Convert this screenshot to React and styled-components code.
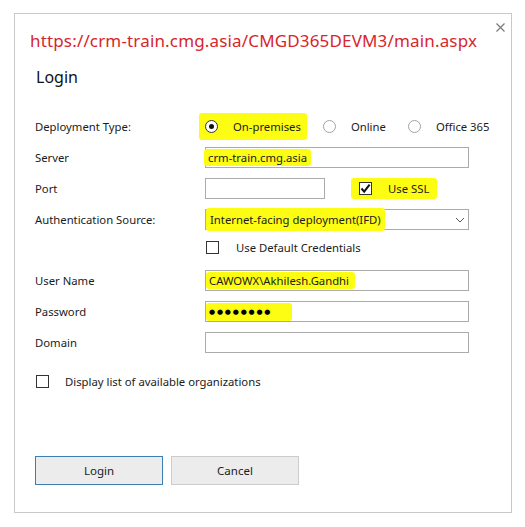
import React from 'react';
import styled, { createGlobalStyle } from 'styled-components';

const GlobalStyle = createGlobalStyle`
  html, body {
    margin: 0;
    padding: 0;
    background: #ffffff;
  }
  body {
    font-family: "Noto Sans", "Open Sans", Arial, sans-serif;
    color: #1b1b1b;
  }
`;

const Styled = {
  Dialog: styled.div`
    position: relative;
    box-sizing: border-box;
    width: 498px;
    height: 500px;
    margin: 13px 0 0 14px;
    border: 1px solid #c9c9c9;
    background: #ffffff;
    padding: 16px 20px 0 20px;
  `,
  Close: styled.button`
    position: absolute;
    top: 6px;
    right: 4px;
    width: 14px;
    height: 14px;
    padding: 0;
    border: 0;
    background: transparent;
    display: flex;
    align-items: center;
    justify-content: center;
  `,
  Url: styled.div`
    margin-left: -5px;
    font-family: "Noto Sans", Arial, sans-serif;
    font-size: 17px;
    line-height: 22px;
    color: #d7262b;
    letter-spacing: 0.16px;
  `,
  Title: styled.h1`
    margin: 14px 0 0 1px;
    font-size: 16px;
    font-weight: 400;
    line-height: 22px;
    color: #111111;
  `,
  Form: styled.div`
    margin-top: 23px;
    display: flex;
    flex-direction: column;
    font-size: 11.3px;
  `,
  Row: styled.div`
    display: grid;
    grid-template-columns: 170px 264px;
    align-items: center;
    height: ${props => props.h || 31}px;
    margin-top: ${props => props.gap || 0}px;
  `,
  Label: styled.div`
    color: #1b1b1b;
    white-space: nowrap;
  `,
  Controls: styled.div`
    display: flex;
    align-items: center;
  `,
  Option: styled.div`
    display: flex;
    align-items: center;
    gap: 15px;
    margin-right: 22px;
    white-space: nowrap;
  `,
  Highlight: styled.span`
    display: inline-flex;
    align-items: center;
    gap: ${props => props.gap || 0}px;
    background: #fdfd14;
    border-radius: 3px;
    padding: ${props => props.pad || '3px 6px'};
    margin: ${props => props.m || '-3px -6px'};
    white-space: nowrap;
  `,
  Radio: styled.span`
    box-sizing: border-box;
    width: 13px;
    height: 13px;
    border-radius: 50%;
    border: 1px solid ${props => (props.checked ? '#333333' : '#a3a3a3')};
    background: #ffffff;
    display: flex;
    align-items: center;
    justify-content: center;
    &::after {
      content: '';
      display: ${props => (props.checked ? 'block' : 'none')};
      width: 5px;
      height: 5px;
      border-radius: 50%;
      background: #111111;
    }
  `,
  Check: styled.span`
    box-sizing: border-box;
    width: 13px;
    height: 13px;
    border: 1px solid #333333;
    background: #ffffff;
    display: flex;
    align-items: center;
    justify-content: center;
    flex-shrink: 0;
  `,
  CheckRow: styled.label`
    display: flex;
    align-items: center;
    gap: ${props => props.gap || 17}px;
    white-space: nowrap;
  `,
  Field: styled.div`
    box-sizing: border-box;
    width: ${props => props.w || 264}px;
    height: 21px;
    border: 1px solid #ababab;
    background: #ffffff;
    display: flex;
    align-items: center;
    justify-content: space-between;
    padding: 0 3px;
    white-space: nowrap;
  `,
  Dots: styled.span`
    font-family: "DejaVu Sans", sans-serif;
    font-size: 7px;
    line-height: 14px;
    letter-spacing: 1.8px;
    color: #000000;
  `,
  Buttons: styled.div`
    display: flex;
    gap: 8px;
    margin-top: 59px;
  `,
  Button: styled.button`
    box-sizing: border-box;
    width: 128px;
    height: 29px;
    border: 1px solid ${props => (props.primary ? '#3d7fb4' : '#cccccc')};
    background: #ececec;
    font-family: "Noto Sans", Arial, sans-serif;
    font-size: 11.5px;
    color: #1b1b1b;
    padding: 0;
  `,
};

const Tick = () => (
  <svg width="11" height="11" viewBox="0 0 11 11">
    <path d="M1.5 5.5 L4.2 8.6 L9.6 1.6" fill="none" stroke="#111" strokeWidth="2" />
  </svg>
);

const Chevron = () => (
  <svg width="10" height="6" viewBox="0 0 10 6">
    <path d="M1 1 L5 5 L9 1" fill="none" stroke="#555" strokeWidth="1" />
  </svg>
);

function App() {
  return (
    <>
      <GlobalStyle />
      <Styled.Dialog>
        <Styled.Close aria-label="close">
          <svg width="9" height="9" viewBox="0 0 9 9">
            <path d="M0.5 0.5 L8.5 8.5 M8.5 0.5 L0.5 8.5" stroke="#7a7a7a" strokeWidth="1.2" />
          </svg>
        </Styled.Close>
        <Styled.Url>https://crm-train.cmg.asia/CMGD365DEVM3/main.aspx</Styled.Url>
        <Styled.Title>Login</Styled.Title>

        <Styled.Form>
          <Styled.Row>
            <Styled.Label>Deployment Type:</Styled.Label>
            <Styled.Controls>
              <Styled.Option>
                <Styled.Highlight gap={15} pad="6px 6px" m="-6px -6px">
                  <Styled.Radio checked />
                  On-premises
                </Styled.Highlight>
              </Styled.Option>
              <Styled.Option>
                <Styled.Radio />
                Online
              </Styled.Option>
              <Styled.Option>
                <Styled.Radio />
                Office 365
              </Styled.Option>
            </Styled.Controls>
          </Styled.Row>

          <Styled.Row>
            <Styled.Label>Server</Styled.Label>
            <Styled.Field>
              <Styled.Highlight pad="1px 4px" m="0 0 0 -5px">crm-train.cmg.asia</Styled.Highlight>
            </Styled.Field>
          </Styled.Row>

          <Styled.Row>
            <Styled.Label>Port</Styled.Label>
            <Styled.Controls>
              <Styled.Field w={120} />
              <Styled.Highlight pad="3px 8px" m="-3px 0 -3px 26px" gap={16}>
                <Styled.Check><Tick /></Styled.Check>
                Use SSL
              </Styled.Highlight>
            </Styled.Controls>
          </Styled.Row>

          <Styled.Row>
            <Styled.Label>Authentication Source:</Styled.Label>
            <Styled.Field>
              <Styled.Highlight pad="4px 4px" m="-4px 0 -4px -3px">Internet-facing deployment(IFD)</Styled.Highlight>
              <Chevron />
            </Styled.Field>
          </Styled.Row>

          <Styled.Row h={24}>
            <span />
            <Styled.CheckRow>
              <Styled.Check style={{ marginLeft: 1 }} />
              Use Default Credentials
            </Styled.CheckRow>
          </Styled.Row>

          <Styled.Row gap={6}>
            <Styled.Label>User Name</Styled.Label>
            <Styled.Field>
              <Styled.Highlight pad="1px 6px 1px 3px" m="0 0 0 -3px">CAWOWX\Akhilesh.Gandhi</Styled.Highlight>
            </Styled.Field>
          </Styled.Row>

          <Styled.Row>
            <Styled.Label>Password</Styled.Label>
            <Styled.Field>
              <Styled.Highlight pad="2px 20px 2px 3px" m="0 0 0 -3px">
                <Styled.Dots>●●●●●●●●</Styled.Dots>
              </Styled.Highlight>
            </Styled.Field>
          </Styled.Row>

          <Styled.Row>
            <Styled.Label>Domain</Styled.Label>
            <Styled.Field />
          </Styled.Row>

          <Styled.Row gap={8}>
            <Styled.CheckRow gap={16} style={{ gridColumn: '1 / 3', marginLeft: 1 }}>
              <Styled.Check />
              Display list of available organizations
            </Styled.CheckRow>
          </Styled.Row>
        </Styled.Form>

        <Styled.Buttons>
          <Styled.Button primary>Login</Styled.Button>
          <Styled.Button>Cancel</Styled.Button>
        </Styled.Buttons>
      </Styled.Dialog>
    </>
  );
}

export default App;
